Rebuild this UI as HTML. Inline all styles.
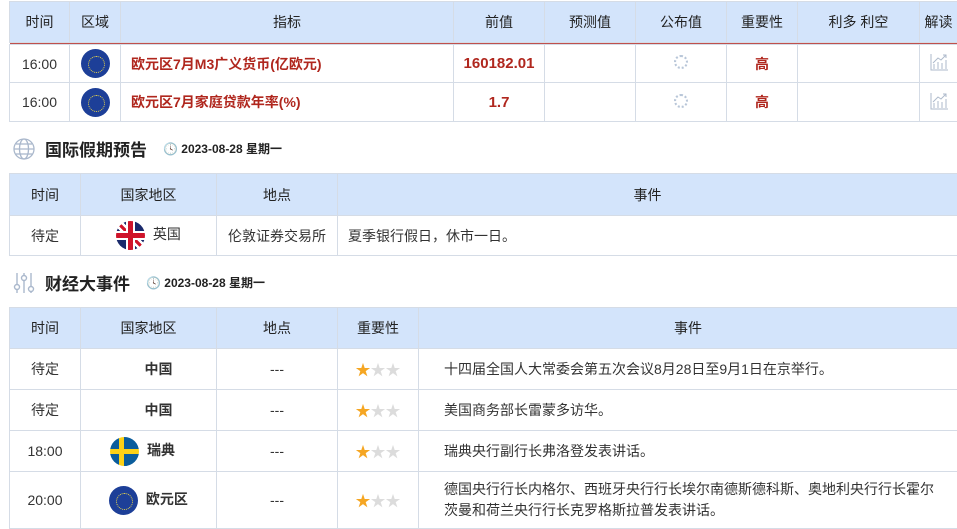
<!DOCTYPE html>
<html><head><meta charset="utf-8">
<style>
*{margin:0;padding:0;box-sizing:border-box}
body{width:957px;height:527px;overflow:hidden;background:#fff;font-family:"Liberation Sans","Noto Sans CJK SC",sans-serif;font-size:14px;color:#333;position:relative}
table{border-collapse:collapse;table-layout:fixed;position:absolute;left:9px}
td,th{border:1px solid #d5dce6;text-align:center;vertical-align:middle;font-weight:normal;overflow:hidden;white-space:nowrap}
th{background:#d3e4fb;color:#222;font-size:14px}
.red{color:#b0271e}
.b{font-weight:bold}
.eu{display:inline-block;width:29px;height:29px;border-radius:50%;background:#1d3f98;vertical-align:middle;position:relative}
.eu:after{content:"";position:absolute;left:7px;top:7px;width:15px;height:15px;border-radius:50%;border:1px dotted #e6d34a}
.se{display:inline-block;width:29px;height:29px;border-radius:50%;vertical-align:middle;background:
linear-gradient(#fcd116,#fcd116) 9px 0/5px 29px no-repeat,linear-gradient(#fcd116,#fcd116) 0 12px/29px 5px no-repeat,#0b5d9c}
.uk{display:inline-block;width:29px;height:29px;border-radius:50%;vertical-align:middle;background:
linear-gradient(#cf142b,#cf142b) 12px 0/5px 29px no-repeat,linear-gradient(#cf142b,#cf142b) 0 12px/29px 5px no-repeat,
linear-gradient(#fff,#fff) 10px 0/9px 29px no-repeat,linear-gradient(#fff,#fff) 0 10px/29px 9px no-repeat,
linear-gradient(45deg,#1a2a6c 40%,#fff 40%,#fff 46%,#cf142b 46%,#cf142b 54%,#fff 54%,#fff 60%,#1a2a6c 60%)}
.star{color:#f5a623;font-size:15px}.gs{color:#dcdcdc;font-size:15px}
.sec{position:absolute;left:12px;font-size:17px;font-weight:bold;color:#222;display:flex;align-items:center}
.sec .d{font-size:12px;font-weight:bold;margin-left:16px;color:#222}
.spin{display:inline-block;width:14px;height:14px;border-radius:50%;border:2px dotted #b8c6d8}
.tl{text-align:left;padding-left:10px}
</style></head><body>

<table style="top:1px;width:948px">
<colgroup><col style="width:60px"><col style="width:51px"><col style="width:333px"><col style="width:91px"><col style="width:91px"><col style="width:91px"><col style="width:71px"><col style="width:122px"><col style="width:38px"></colgroup>
<tr style="height:41px"><th>时间</th><th>区域</th><th>指标</th><th>前值</th><th>预测值</th><th>公布值</th><th>重要性</th><th>利多 利空</th><th>解读</th></tr>
<tr style="height:2px"><td colspan="9" style="background:#c0504d;border:none;height:2px;padding:0"></td></tr>
<tr style="height:38px"><td>16:00</td><td><span class="eu"></span></td><td class="tl red b">欧元区7月M3广义货币(亿欧元)</td><td class="red b" style="font-size:15px">160182.01</td><td></td><td><span class="spin"></span></td><td class="red b">高</td><td></td><td><svg width="20" height="20" viewBox="0 0 20 20" fill="none" stroke="#aebacb" stroke-width="1"><path d="M2 2V18H19"/><path d="M5 17V12M9 17V10M13 17V11M17 17V8"/><path d="M4 11L9 6L12 8L17 3M14 3H17V6"/></svg></td></tr>
<tr style="height:39px"><td>16:00</td><td><span class="eu"></span></td><td class="tl red b">欧元区7月家庭贷款年率(%)</td><td class="red b" style="font-size:15px">1.7</td><td></td><td><span class="spin"></span></td><td class="red b">高</td><td></td><td><svg width="20" height="20" viewBox="0 0 20 20" fill="none" stroke="#aebacb" stroke-width="1"><path d="M2 2V18H19"/><path d="M5 17V12M9 17V10M13 17V11M17 17V8"/><path d="M4 11L9 6L12 8L17 3M14 3H17V6"/></svg></td></tr>
</table>

<div class="sec" style="top:136px"><svg width="24" height="24" viewBox="0 0 24 24" fill="none" stroke="#aab8cc" stroke-width="1.3"><circle cx="12" cy="12" r="10"/><ellipse cx="12" cy="12" rx="4.5" ry="10"/><line x1="2" y1="12" x2="22" y2="12"/><line x1="4" y1="7" x2="20" y2="7"/><line x1="4" y1="17" x2="20" y2="17"/></svg><span style="margin-left:9px">国际假期预告</span><span class="d">🕓 2023-08-28 星期一</span></div>

<table style="top:173px;width:948px">
<colgroup><col style="width:71px"><col style="width:136px"><col style="width:121px"><col style="width:620px"></colgroup>
<tr style="height:42px"><th>时间</th><th>国家地区</th><th>地点</th><th>事件</th></tr>
<tr style="height:40px"><td>待定</td><td><span class="uk"></span>&nbsp;&nbsp;英国</td><td>伦敦证券交易所</td><td class="tl">夏季银行假日，休市一日。</td></tr>
</table>

<div class="sec" style="top:270px"><svg width="24" height="24" viewBox="0 0 24 24" fill="none" stroke="#aab8cc" stroke-width="1.4"><line x1="5" y1="2" x2="5" y2="22"/><line x1="12" y1="2" x2="12" y2="22"/><line x1="19" y1="2" x2="19" y2="22"/><circle cx="5" cy="16" r="2.5" fill="#fff"/><circle cx="12" cy="7" r="2.5" fill="#fff"/><circle cx="19" cy="18" r="2.5" fill="#fff"/></svg><span style="margin-left:9px">财经大事件</span><span class="d">🕓 2023-08-28 星期一</span></div>

<table style="top:307px;width:948px">
<colgroup><col style="width:71px"><col style="width:136px"><col style="width:121px"><col style="width:81px"><col style="width:539px"></colgroup>
<tr style="height:41px"><th>时间</th><th>国家地区</th><th>地点</th><th>重要性</th><th>事件</th></tr>
<tr style="height:41px"><td>待定</td><td class="b" style="padding-left:20px">中国</td><td>---</td><td><span class="star">★</span><span class="gs">★★</span></td><td class="tl" style="padding-left:25px">十四届全国人大常委会第五次会议8月28日至9月1日在京举行。</td></tr>
<tr style="height:41px"><td>待定</td><td class="b" style="padding-left:20px">中国</td><td>---</td><td><span class="star">★</span><span class="gs">★★</span></td><td class="tl" style="padding-left:25px">美国商务部长雷蒙多访华。</td></tr>
<tr style="height:41px"><td>18:00</td><td class="b"><span class="se"></span>&nbsp;&nbsp;瑞典&nbsp;&nbsp;&nbsp;</td><td>---</td><td><span class="star">★</span><span class="gs">★★</span></td><td class="tl" style="padding-left:25px">瑞典央行副行长弗洛登发表讲话。</td></tr>
<tr style="height:57px"><td>20:00</td><td class="b"><span class="eu"></span>&nbsp;&nbsp;欧元区</td><td>---</td><td><span class="star">★</span><span class="gs">★★</span></td><td class="tl" style="padding-left:25px;white-space:normal;line-height:21px">德国央行行长内格尔、西班牙央行行长埃尔南德斯德科斯、奥地利央行行长霍尔<br>茨曼和荷兰央行行长克罗格斯拉普发表讲话。</td></tr>
</table>
</body></html>
